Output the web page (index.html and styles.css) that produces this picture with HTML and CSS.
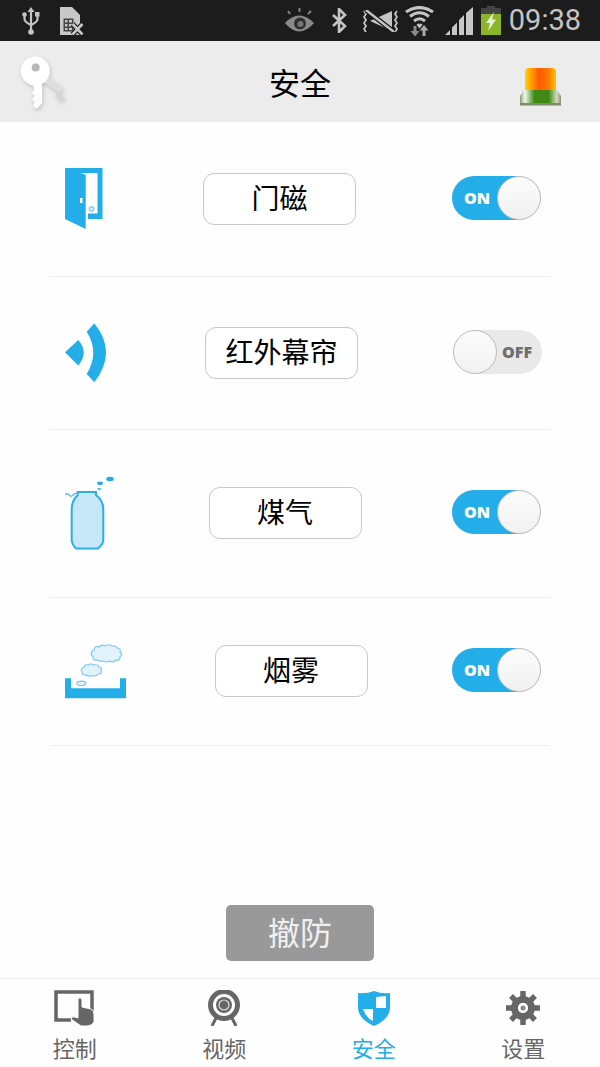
FILE: index.html
```html
<!DOCTYPE html>
<html lang="zh">
<head>
<meta charset="utf-8">
<title>安全</title>
<link rel="stylesheet" href="styles.css">
</head>
<body>
<div class="page">
  <div class="statusbar">
    <div class="status-group">
      <svg class="st-usb" width="18" height="28" viewBox="0 0 18 28" fill="none" stroke="#c4c4c4" stroke-width="2.200"><path d="M9 3V24"/><path d="M2.500 8V12Q2.500 15 9 18Q15.500 15 15.500 12V8"/><path d="M9 0L12.500 5H5.500Z" fill="#c4c4c4" stroke="none"/><circle cx="9" cy="25" r="2.800" fill="#c4c4c4" stroke="none"/><circle cx="2.500" cy="7.500" r="2.300" fill="#c4c4c4" stroke="none"/><rect x="13" y="5" width="4.500" height="4.500" fill="#c4c4c4" stroke="none"/></svg>
      <svg class="st-sim" width="25" height="28" viewBox="0 0 25 28"><path d="M1 0H13L21 8V28H1Z" fill="#c8c8c8"/><path d="M4.500 11.500H14.500V24.500H4.500ZM6 13V15.500H8.500V13ZM10 13V15.500H13V13ZM6 17V19.500H8.500V17ZM10 17V19.500H13V17ZM6 21V23H8.500V21ZM10 21V23H13V21Z" fill="#444" fill-rule="evenodd"/><path d="M13.500 17L23.500 27.500M23.500 17L13.500 27.500" stroke="#1c1c1c" stroke-width="5"/><path d="M13.500 17L23.500 27.500M23.500 17L13.500 27.500" stroke="#c8c8c8" stroke-width="2.600"/></svg>
    </div>
    <div class="status-group">
      <svg width="29" height="26" viewBox="0 0 29 26"><path d="M0 15Q14 0 29 15Q14 32 0 15Z" fill="#8a8a8a"/><circle cx="15" cy="15.500" r="6" fill="#2e2e2e"/><circle cx="15.500" cy="16" r="3" fill="#777"/><path d="M5 6L3 3M14.500 4V0M23 6L26 3" stroke="#8a8a8a" stroke-width="1.800"/></svg>
      <svg class="st-bt" width="15" height="25" viewBox="0 0 15 25" fill="none" stroke="#c4c4c4" stroke-width="2.600"><path d="M1 7L13 18L7 24V1L13 7L1 18"/></svg>
      <svg class="st-vib" width="35" height="22" viewBox="0 0 35 22" fill="none" stroke="#c4c4c4" stroke-width="1.800"><path d="M1 1L3 4L1 7L3 10L1 13L3 16L1 19L3 22"/><path d="M34 1L32 4L34 7L32 10L34 13L32 16L34 19L32 22"/><path d="M29 1V21L7 11Z" fill="#c4c4c4" stroke="none"/><path d="M3 0L31 22" stroke="#1c1c1c" stroke-width="5"/><path d="M3 0L31 22" stroke-width="2.400"/></svg>
      <svg class="st-wifi" width="29" height="30" viewBox="0 0 29 30" fill="none" stroke="#c4c4c4"><path d="M1 6Q14.500 -3 28 6" stroke-width="3.200"/><path d="M5 10.500Q14.500 3 24 10.500" stroke-width="3"/><path d="M9 15Q14.500 10.500 20 15" stroke-width="3"/><path d="M12.500 18L14.500 20.500L16.500 18" stroke-width="2.500"/><path d="M10 20V28" stroke="#8a8a8a" stroke-width="3"/><path d="M5.500 25L10 30.500L14.500 25Z" fill="#8a8a8a" stroke="none"/><path d="M19 30V22" stroke="#a8a8a8" stroke-width="3"/><path d="M14.500 24.500L19 19L23.500 24.500Z" fill="#a8a8a8" stroke="none"/></svg>
      <svg class="st-sig" width="28" height="28" viewBox="0 0 28 28" fill="#c8c8c8"><path d="M0 28L5 23V28ZM7 28V20.500L12 15.500V28ZM14 28V13L19 8V28ZM21 28V6L28 0V28Z"/></svg>
      <svg class="st-bat" width="20" height="29" viewBox="0 0 20 29"><path d="M6 0H14V3H6Z" fill="#444"/><rect y="2" width="20" height="7" fill="#444"/><rect y="8" width="20" height="21" fill="#8cb529"/><path d="M13 6L5 17H9L7 25L15 13.500H11Z" fill="#e8efd8"/></svg>
      <span class="clock">09:38</span>
    </div>
  </div>

  <header class="topbar">
    <svg class="key" width="48" height="56" viewBox="0 0 48 56"><path d="M21 24L39 37L43 33L27 20Z" fill="#dedede"/><path d="M39 37L45 42L41 45L35 40Z" fill="#d6d6d6"/><circle cx="15.300" cy="15" r="14.500" fill="#fff"/><path d="M13 26H22V47L18 52H15L13 49L15 46L12 43L15 40L12 37L14 34Z" fill="#fff"/><circle cx="15.700" cy="11.500" r="4" fill="#b8b8b8"/></svg>
    <h1 class="title">安全</h1>
    <svg class="lamp" width="41" height="38" viewBox="0 0 41 38"><defs><linearGradient id="dome" x1="0" x2="1" y1="0" y2="0"><stop offset="0" stop-color="#ffd400"/><stop offset=".45" stop-color="#ff5a00"/><stop offset=".75" stop-color="#ff7a00"/><stop offset="1" stop-color="#ffc400"/></linearGradient><linearGradient id="base" x1="0" x2="1" y1="0" y2="0"><stop offset="0" stop-color="#8a9a70"/><stop offset=".12" stop-color="#f4f8ee"/><stop offset=".35" stop-color="#3f8a14"/><stop offset=".7" stop-color="#3f8a14"/><stop offset=".9" stop-color="#d8dcc4"/><stop offset="1" stop-color="#8a9070"/></linearGradient></defs><path d="M5 24V4Q5 0 9 0H32Q36 0 36 4V24Z" fill="url(#dome)"/><path d="M4 22H37L41 28V37H0V28Z" fill="url(#base)"/><rect x="0" y="35" width="41" height="2.500" fill="#7f8a6c"/></svg>
  </header>

  <main class="sensors">
    <section class="sensor">
      <svg class="icon-door" width="38" height="62" viewBox="0 0 38 62"><path d="M0 0H37.500V51H23V45.500H32.500V5H11L0 0Z" fill="#23ade9"/><path d="M0 0L20.700 6.700V61L0 51Z" fill="#23ade9"/><rect x="15" y="30" width="2.500" height="5" fill="#fff"/><circle cx="26.500" cy="41" r="3" fill="#8fd2f2"/><circle cx="26.500" cy="41" r="1.200" fill="#fff"/></svg>
      <button class="label">门磁</button>
      <div class="switch on"><span class="switch-text">ON</span><span class="knob"></span></div>
    </section>
    <section class="sensor">
      <svg class="icon-ir" width="41" height="60" viewBox="0 0 41 60" fill="#23ade9"><path d="M0 29.300L13.300 17Q24 29.300 13.300 42.500Z"/><path d="M29.300 .3L21.700 8.700Q34.900 29.300 21.700 51L29.300 59.300Q52.700 29.300 29.300 .3Z"/></svg>
      <button class="label">红外幕帘</button>
      <div class="switch off"><span class="knob"></span><span class="switch-text">OFF</span></div>
    </section>
    <section class="sensor">
      <svg class="icon-gas" width="49" height="75" viewBox="0 0 49 75"><path d="M12.700 16H31V19Q38.300 25 38.300 33V64Q38.300 68 33 72.500H11Q6.700 68 6.700 64V33Q6.700 25 12.700 19Z" fill="#c6e7f8" stroke="#2aafe9" stroke-width="2"/><path d="M0 19Q2 16.500 4 19T8 19T12 17.500" fill="none" stroke="#5cc0ee" stroke-width="1.300"/><ellipse cx="35" cy="7.300" rx="3" ry="1.800" fill="#23ade9"/><ellipse cx="45" cy="3" rx="3.800" ry="2.200" fill="#23ade9"/><ellipse cx="34.300" cy="13" rx="2" ry="1.300" fill="#5cc0ee"/></svg>
      <button class="label raised">煤气</button>
      <div class="switch on"><span class="switch-text">ON</span><span class="knob"></span></div>
    </section>
    <section class="sensor">
      <svg class="icon-smoke" width="61" height="55" viewBox="0 0 61 55"><path d="M0 34.300H6V44.300H55V34.300H61V54.300H0Z" fill="#23ade9"/><path d="M29 6Q30 1 34 3Q37 0 40 2Q44 -0.500 47 2Q51 1 52 4Q56 4 55 8Q58 10 55 13Q55 17 51 16Q48 19 45 17Q41 19 38 17Q34 18 33 16Q28 17 28 13Q25 10 27 8Q27 6 29 6Z" fill="#e2f2fb" stroke="#7cc8ee" stroke-width="1.200"/><path d="M19 23Q20 20 23 21Q26 19 29 21Q33 20 34 23Q38 24 36 27Q37 30 33 30Q31 33 27 31.500Q23 33 21 31Q17 31 17 28Q15 25 19 23Z" fill="#e2f2fb" stroke="#7cc8ee" stroke-width="1.200"/><ellipse cx="16.300" cy="39.300" rx="4.500" ry="2.200" fill="#e2f2fb" stroke="#7cc8ee" stroke-width="1.200"/></svg>
      <button class="label raised">烟雾</button>
      <div class="switch on"><span class="switch-text">ON</span><span class="knob"></span></div>
    </section>
  </main>

  <button class="disarm">撤防</button>

  <nav class="tabs">
    <div class="tab">
      <svg width="42" height="36" viewBox="0 0 42 36"><path d="M17 30H2V2H38V21" fill="none" stroke="#666" stroke-width="3.500"/><path d="M25 8Q28 7 28 10V17L37 19Q40 20 40 24V32Q38 36 33 36H27L17 29Q17 26 21 27L24 28V10Q24 8 25 8Z" fill="#666" stroke="#fff" stroke-width="1"/></svg>
      <span class="tab-label">控制</span>
    </div>
    <div class="tab">
      <svg width="36" height="36" viewBox="0 0 36 36"><circle cx="18" cy="15" r="13.500" fill="none" stroke="#666" stroke-width="5"/><circle cx="18" cy="15" r="8" fill="#666"/><circle cx="18" cy="15" r="5" fill="none" stroke="#ddd" stroke-width="1.200"/><path d="M10 28L6 36M26 28L30 36" stroke="#666" stroke-width="3"/></svg>
      <span class="tab-label">视频</span>
    </div>
    <div class="tab active">
      <svg width="36" height="36" viewBox="0 0 36 36"><path d="M2 3Q10 4 18 1Q26 4 34 3V17Q34 29 18 36Q2 29 2 17Z" fill="#23ade9"/><path d="M20 7L30 6V18H20Z" fill="#fff"/><path d="M7 19H17V31Q10 28 7 19Z" fill="#fff"/></svg>
      <span class="tab-label">安全</span>
    </div>
    <div class="tab">
      <svg width="36" height="36" viewBox="0 0 36 36"><circle cx="18" cy="18" r="8.500" fill="none" stroke="#666" stroke-width="7"/><g stroke="#666" stroke-width="5.500"><path d="M18 1V35M1 18H35M6 6L30 30M30 6L6 30" stroke-dasharray="6 22"/></g><circle cx="18" cy="18" r="5" fill="#fff"/><circle cx="18" cy="18" r="2.500" fill="#888"/></svg>
      <span class="tab-label">设置</span>
    </div>
  </nav>
</div>
</body>
</html>
```
FILE: styles.css
```css
* { box-sizing: border-box; }
html, body { margin: 0; padding: 0; }
body {
  background: #fefefe;
  font-family: "Noto Sans CJK SC", "Liberation Sans", sans-serif;
}
.page {
  width: 600px;
  height: 1067px;
  display: flex;
  flex-direction: column;
  overflow: hidden;
}
.statusbar {
  height: 41px;
  flex: none;
  background: #1c1c1c;
  display: flex;
  justify-content: space-between;
  align-items: center;
  padding: 0 19px 0 22px;
}
.status-group { display: flex; align-items: center; }
.st-sim { margin-left: 19px; }
.st-bt { margin-left: 18px; }
.st-vib { margin-left: 16px; }
.st-wifi { margin-left: 7px; }
.st-sig { margin-left: 11px; }
.st-bat { margin-left: 8px; }
.clock {
  margin-left: 8px;
  font-family: Roboto, "Liberation Sans", sans-serif;
  font-size: 29px;
  line-height: 41px;
  color: #c4c4c4;
}
.topbar {
  height: 81px;
  flex: none;
  background: #ececec;
  display: flex;
  align-items: center;
  justify-content: space-between;
  padding: 0 39px 0 20px;
  position: relative;
}
.key { filter: drop-shadow(1px 2px 2px rgba(0, 0, 0, .18)); margin-top: 4px; }
.lamp { margin-top: 11px; }
.title {
  position: absolute;
  left: 0;
  right: 0;
  margin: 0;
  text-align: center;
  font-size: 31px;
  font-weight: 400;
  color: #000;
  line-height: 79px;
}
.sensors {
  display: flex;
  flex-direction: column;
  margin: 0 50px;
}
.sensor {
  display: flex;
  align-items: center;
  justify-content: space-between;
  padding: 46px 5px 46px 15px;
  border-bottom: 1px solid #f0f0f0;
}
.sensor > svg { display: block; flex: none; }
.label {
  width: 153px;
  height: 52px;
  flex: none;
  padding: 0 0 4px;
  background: #fff;
  border: 1.500px solid #c8c8c8;
  border-radius: 11px;
  font-family: inherit;
  font-size: 28px;
  line-height: 44px;
  color: #000;
}
.label.raised { margin-bottom: 1px; }
.switch {
  width: 89px;
  height: 44px;
  flex: none;
  border-radius: 22px;
  display: flex;
  align-items: center;
  justify-content: space-between;
  margin-left: -4px;
  margin-bottom: 3px;
  font-family: "Open Sans", "Liberation Sans", sans-serif;
  font-size: 16px;
  font-weight: 800;
}
.switch.on {
  margin-right: 4px;
  background: linear-gradient(90deg, #23ade9 75%, #dcdcdc 75%);
  color: #fff;
  padding-left: 12px;
}
.switch.off {
  margin-right: 3px;
  background: #e9e9e9;
  color: #6e6e6e;
  padding-right: 10px;
}
.knob {
  width: 44px;
  height: 44px;
  border-radius: 50%;
  background: linear-gradient(#fcfcfc, #f1f1f1);
  border: 1.500px solid #bdbdbd;
}
.disarm {
  width: 148px;
  height: 56px;
  flex: none;
  align-self: center;
  margin: auto 0 17px 0;
  padding: 0 0 3px;
  border: 0;
  border-radius: 5px;
  background: #999;
  color: #f0f0f0;
  font-family: inherit;
  font-size: 32px;
  line-height: 53px;
}
.tabs {
  height: 89px;
  flex: none;
  display: grid;
  grid-template-columns: repeat(4, 1fr);
  border-top: 1px solid #f0f0f0;
  padding: 11px 2px 0 0;
}
.tab {
  display: flex;
  flex-direction: column;
  align-items: center;
  color: #666;
}
.tab svg { display: block; flex: none; }
.tab-label { font-size: 22px; line-height: 30px; margin-top: 6px; }
.tab.active { color: #23ade9; }
```
